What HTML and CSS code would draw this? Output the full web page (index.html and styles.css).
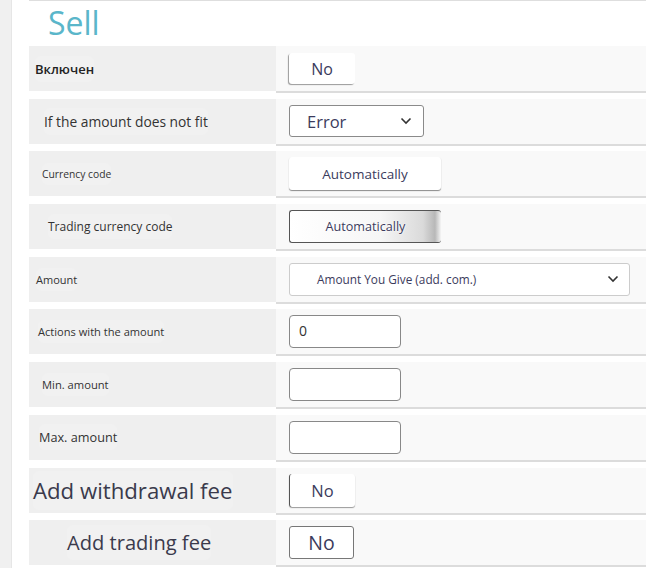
FILE: index.html
```html
<!DOCTYPE html>
<html>
<head>
<meta charset="utf-8">
<link rel="stylesheet" href="styles.css">
</head>
<body>
<div class="page">
  <aside class="side"></aside>
  <main class="main">
    <h1 class="title">Sell</h1>
    <div class="form">
      <div class="row">
        <div class="label l1"><span>Включен</span></div>
        <div class="value"><button class="btn btn-no">No</button></div>
      </div>
      <div class="row">
        <div class="label l2"><span>If the amount does not fit</span></div>
        <div class="value">
          <div class="select sel-error"><span>Error</span>
            <svg class="chev" width="12" height="8" viewBox="0 0 12 8"><path d="M1.5 1.5 L6 6 L10.5 1.5" fill="none" stroke="#333" stroke-width="1.6"/></svg>
          </div>
        </div>
      </div>
      <div class="row">
        <div class="label l3"><span>Currency code</span></div>
        <div class="value"><button class="btn btn-auto">Automatically</button></div>
      </div>
      <div class="row">
        <div class="label l4"><span>Trading currency code</span></div>
        <div class="value"><button class="btn btn-auto2">Automatically</button></div>
      </div>
      <div class="row">
        <div class="label l5"><span>Amount</span></div>
        <div class="value">
          <div class="select sel-amount"><span>Amount You Give (add. com.)</span>
            <svg class="chev" width="12" height="8" viewBox="0 0 12 8"><path d="M1.5 1.5 L6 6 L10.5 1.5" fill="none" stroke="#333" stroke-width="1.6"/></svg>
          </div>
        </div>
      </div>
      <div class="row">
        <div class="label l6"><span>Actions with the amount</span></div>
        <div class="value"><div class="input">0</div></div>
      </div>
      <div class="row">
        <div class="label l7"><span>Min. amount</span></div>
        <div class="value"><div class="input"></div></div>
      </div>
      <div class="row">
        <div class="label l8"><span>Max. amount</span></div>
        <div class="value"><div class="input"></div></div>
      </div>
      <div class="row">
        <div class="label l9"><span>Add withdrawal fee</span></div>
        <div class="value"><button class="btn btn-no2">No</button></div>
      </div>
      <div class="row">
        <div class="label l10"><span>Add trading fee</span></div>
        <div class="value"><button class="btn btn-no3">No</button></div>
      </div>
    </div>
  </main>
</div>
</body>
</html>
```

FILE: styles.css
```css
html, body {
  margin: 0;
  padding: 0;
  background: #ffffff;
  font-family: "Open Sans", "Noto Sans", sans-serif;
}
.page {
  display: flex;
  min-height: 568px;
}
.side {
  width: 11px;
  flex: none;
  background: #f0f0f0;
  border-right: 1px solid #e6e6e6;
}
.main {
  flex: 1;
  padding-left: 17px;
}
.title {
  margin: 0;
  height: 45px;
  border-top: 1px solid #dedede;
  padding-left: 19px;
  font-weight: 400;
  font-size: 32px;
  line-height: 44px;
  color: #5ab6ca;
}
.form {
  display: flex;
  flex-direction: column;
}
.row {
  display: grid;
  grid-template-columns: 247px 1fr;
  height: 47px;
  margin-bottom: 5.7px;
}
.label {
  background: #efefef;
  display: flex;
  align-items: center;
  color: #2a2a36;
  height: 45px;
}
.label span {
  background: #f1f1f1;
  border-radius: 6px;
  padding: 4px 0;
}
.value {
  background: #f9f9f9;
  border-bottom: 2px solid #dcdcdc;
  display: flex;
  align-items: center;
  padding-left: 13px;
}
.l1 { padding-left: 6px; font-size: 13px; font-weight: 600; color: #222; }
.l2 { padding-left: 15px; font-size: 13.8px; color: #333; }
.l3 { padding-left: 13px; font-size: 10.3px; color: #333; }
.l4 { padding-left: 19px; font-size: 12px; color: #333; }
.l5 { padding-left: 7px; font-size: 11px; color: #333; }
.l6 { padding-left: 9px; font-size: 11.1px; color: #333; }
.l7 { padding-left: 13px; font-size: 11.2px; color: #333; }
.l8 { padding-left: 10px; font-size: 12.7px; color: #333; }
.l9 { padding-left: 4px; font-size: 22.2px; color: #3a3a4c; }
.l10 { padding-left: 38px; font-size: 20.1px; color: #3a3a4c; }

.btn {
  font-family: "Open Sans", "Noto Sans", sans-serif;
  background: #ffffff;
  border: none;
  padding: 0;
  color: #3b3b5c;
  border-radius: 3px;
  cursor: pointer;
}
.btn-no {
  width: 66px;
  height: 31px;
  font-size: 16px;
  box-shadow: -1px 1px 1px #9a9a9a;
}
.btn-auto {
  width: 152px;
  height: 33px;
  font-size: 13.5px;
  box-shadow: 0 1px 1px #8a8a8a;
}
.btn-auto2 {
  width: 152px;
  height: 33px;
  font-size: 12.6px;
  border: 1px solid #555;
  border-right: none;
  background: linear-gradient(to right, #ffffff 0%, #f6f6f6 60%, #dadada 88%, #b8b8b8 96%, #f5f5f5 100%);
  text-shadow: 0 0 2px #fff, 0 0 2px #fff;
}
.btn-no2 {
  width: 66px;
  height: 33px;
  font-size: 16.5px;
  border-left: 1px solid #555;
  box-shadow: 0 1px 1px #9a9a9a;
}
.btn-no3 {
  width: 65px;
  height: 33px;
  font-size: 19.5px;
  border: 1px solid #777;
}
.select {
  box-sizing: border-box;
  background: #fff;
  border-radius: 3px;
  display: flex;
  align-items: center;
  justify-content: space-between;
  color: #3b3b5c;
}
.sel-error {
  width: 135px;
  height: 32px;
  border: 1px solid #8a8a8a;
  padding: 0 11px 0 17px;
  font-size: 16.5px;
}
.sel-amount {
  width: 341px;
  height: 33px;
  border: 1px solid #cccccc;
  padding: 0 10px 0 27px;
  font-size: 11.8px;
}
.chev { display: block; }
.input {
  box-sizing: border-box;
  width: 112px;
  height: 33px;
  background: #fff;
  border: 1px solid #888;
  border-radius: 4px;
  padding-left: 9px;
  font-size: 14px;
  line-height: 30px;
  color: #333;
}
```
